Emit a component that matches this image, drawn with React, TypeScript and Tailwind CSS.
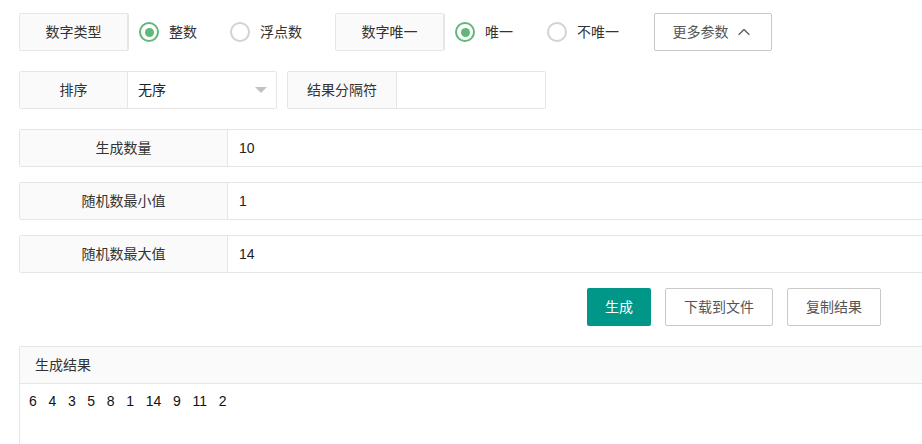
import { ChevronUp } from "lucide-react";

const font = { fontFamily: '"Liberation Sans", "Noto Sans CJK SC", sans-serif' };

function Label({ text, w }: { text: string; w: string }) {
  return (
    <div className={`${w} h-full flex items-center justify-center bg-[#fafafa] border-r border-[#e6e6e6] text-[#333] text-sm`}>
      {text}
    </div>
  );
}

function Radio({ label, checked }: { label: string; checked?: boolean }) {
  return (
    <div className="flex items-center">
      <span
        className={`w-5 h-5 rounded-full border-2 flex items-center justify-center ${checked ? "border-[#5fb878]" : "border-[#d2d2d2]"}`}
      >
        {checked && <span className="w-[9px] h-[9px] rounded-full bg-[#5fb878]" />}
      </span>
      <span className="ml-[10px] text-sm text-[#333]">{label}</span>
    </div>
  );
}

function FieldRow({ label, value }: { label: string; value: string }) {
  return (
    <div className="flex h-[38px] w-[960px] border border-[#e6e6e6] rounded-[2px] overflow-hidden">
      <Label text={label} w="w-[208px]" />
      <div className="flex-1 flex items-center pl-[11px] text-sm text-[#222]">{value}</div>
    </div>
  );
}

export default function App() {
  const nums = [6, 4, 3, 5, 8, 1, 14, 9, 11, 2];
  return (
    <div className="w-[922px] h-[444px] overflow-hidden bg-white" style={font}>
      <div className="pl-[19px] pt-[13px]">
        {/* row 1 */}
        <div className="flex items-center h-[38px]">
          <div className="h-full border border-[#e6e6e6] rounded-[2px] overflow-hidden">
            <Label text="数字类型" w="w-[108px]" />
          </div>
          <div className="ml-[10px]"><Radio label="整数" checked /></div>
          <div className="ml-[33px]"><Radio label="浮点数" /></div>
          <div className="ml-[33px] h-full border border-[#e6e6e6] rounded-[2px] overflow-hidden">
            <Label text="数字唯一" w="w-[108px]" />
          </div>
          <div className="ml-[10px]"><Radio label="唯一" checked /></div>
          <div className="ml-[34px]"><Radio label="不唯一" /></div>
          <button className="ml-[35px] h-[38px] w-[118px] border border-[#c9c9c9] rounded-[2px] flex items-center justify-center gap-[5px] text-sm text-[#555] bg-white">
            更多参数
            <ChevronUp size={20} strokeWidth={1.4} className="text-[#555]" />
          </button>
        </div>

        {/* row 2 */}
        <div className="flex mt-[20px] h-[38px]">
          <div className="flex h-full w-[258px] border border-[#e6e6e6] rounded-[2px] overflow-hidden">
            <Label text="排序" w="w-[108px]" />
            <div className="flex-1 flex items-center justify-between pl-[10px] pr-[9px] text-sm text-[#222]">
              无序
              <span className="w-0 h-0 border-l-[6px] border-r-[6px] border-t-[6px] border-l-transparent border-r-transparent border-t-[#c2c2c2]" />
            </div>
          </div>
          <div className="flex h-full ml-[10px] w-[259px] border border-[#e6e6e6] rounded-[2px] overflow-hidden">
            <Label text="结果分隔符" w="w-[109px]" />
            <div className="flex-1" />
          </div>
        </div>

        {/* fields */}
        <div className="mt-[20px] flex flex-col gap-[15px]">
          <FieldRow label="生成数量" value="10" />
          <FieldRow label="随机数最小值" value="1" />
          <FieldRow label="随机数最大值" value="14" />
        </div>

        {/* buttons */}
        <div className="flex mt-[15px] pl-[568px] gap-[14px]">
          <button className="h-[38px] w-[64px] rounded-[2px] bg-[#009688] text-white text-sm">生成</button>
          <button className="h-[38px] w-[108px] rounded-[2px] border border-[#c9c9c9] bg-white text-[#555] text-sm">下载到文件</button>
          <button className="h-[38px] w-[94px] rounded-[2px] border border-[#c9c9c9] bg-white text-[#555] text-sm">复制结果</button>
        </div>

        {/* result */}
        <div className="mt-[20px] w-[960px] border border-[#e6e6e6] rounded-[2px]">
          <div className="h-[37px] flex items-center pl-[15px] bg-[#fafafa] border-b border-[#e6e6e6] text-sm text-[#333]">
            生成结果
          </div>
          <div className="pl-[9px] pt-[7px] h-[80px] text-sm text-[#111] whitespace-pre">
            {nums.join("   ")}
          </div>
        </div>
      </div>
    </div>
  );
}
